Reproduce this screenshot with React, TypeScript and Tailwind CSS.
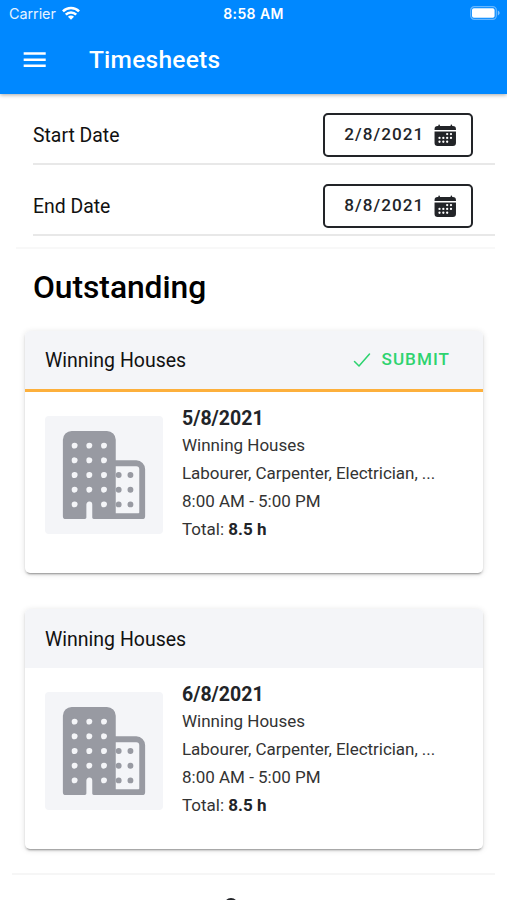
import { IoBusiness, IoCalendar, IoCheckmarkOutline, IoMenuSharp } from "react-icons/io5";

function StatusBar() {
  return (
    <div className="grid h-[27px] grid-cols-3 items-center px-[9px] font-['Inter',sans-serif] text-white">
      <div className="flex items-center gap-[6px]">
        <span className="pt-px text-[14.4px] leading-none tracking-[-0.05px] opacity-90">Carrier</span>
        <svg className="-mt-px" width="18" height="14" viewBox="0 0 19 14" fill="none" stroke="currentColor" strokeWidth="2.7">
          <path d="M1 5.2A12 12 0 0 1 18 5.2" />
          <path d="M4 8.8A7.8 7.8 0 0 1 15 8.8" />
          <path d="M9.5 14 6.3 10.9A4.5 4.5 0 0 1 12.7 10.9Z" fill="currentColor" stroke="none" />
        </svg>
      </div>
      <span className="pt-px text-center text-[14px] font-semibold leading-none tracking-[0.4px]">8:58 AM</span>
      <svg className="-mr-[3px] -mt-px justify-self-end" width="31" height="14" viewBox="0 0 31 14">
        <rect x="0.7" y="0.7" width="25.6" height="12.6" rx="3.6" fill="none" stroke="white" strokeOpacity="0.4" strokeWidth="1.2" />
        <rect x="2" y="2.2" width="22.6" height="9.6" rx="1.8" fill="white" />
        <path d="M27.8 4.6c2.4.8 2.4 4 0 4.8z" fill="white" fillOpacity="0.5" />
      </svg>
    </div>
  );
}

function DateRow({ label, value }: { label: string; value: string }) {
  return (
    <div className="ml-[33px] mr-[12px] flex h-[71px] items-center justify-between border-b-2 border-[#e8e8e8] pr-[22px] pt-[12px]">
      <span className="pt-[2px] text-[19.4px] text-[#111]">{label}</span>
      <button className="flex h-[44px] w-[150px] items-center justify-center gap-[9px] rounded-[5px] border-[2.4px] border-[#222428] pl-[6px] text-[17.1px] font-medium tracking-[1.03px] text-[#222428]">
        {value}
        <IoCalendar className="mt-px" size={24.5} />
      </button>
    </div>
  );
}

function TimesheetCard({ date, submit }: { date: string; submit?: boolean }) {
  return (
    <section className="ml-[25px] mr-[24px] overflow-hidden rounded-[5px] bg-white shadow-[0_3px_1px_-2px_rgba(0,0,0,0.2),0_2px_2px_0_rgba(0,0,0,0.14),0_1px_6px_0_rgba(0,0,0,0.12)]">
      <header className={`flex items-center justify-between bg-[#f4f5f8] pl-[20px] pr-[33px] pt-[2px] ${submit ? "h-[61px] border-b-[3px] border-[#fdb03c]" : "h-[59px]"}`}>
        <h2 className="text-[19.5px] text-[#111]">Winning Houses</h2>
        {submit && (
          <button className="-mt-[2px] flex items-center gap-[8px] text-[17.1px] font-medium tracking-[1.03px] text-[#2dd36f]">
            <IoCheckmarkOutline size={24} />
            SUBMIT
          </button>
        )}
      </header>
      <div className="flex h-[181px] gap-[20px] px-[20px] pt-[24px]">
        <div className="flex size-[118px] shrink-0 items-center justify-center rounded-[4px] bg-[#f4f5f8] pb-px text-[#989aa2]">
          <IoBusiness size={94} />
        </div>
        <div className="-ml-px -mt-[11px] text-[17px] leading-[28px] text-[#333]">
          <h3 className="h-[26px] text-[19.5px] font-bold leading-[28px] text-[#222428]">{date}</h3>
          <p>Winning Houses</p>
          <p className="tracking-[-0.04px]">Labourer, Carpenter, Electrician, ...</p>
          <p>8:00 AM - 5:00 PM</p>
          <p>Total: <b className="text-[#222428]">8.5 h</b></p>
        </div>
      </div>
    </section>
  );
}

export default function App() {
  return (
    <div className="h-[900px] w-[507px] overflow-hidden bg-white font-['Roboto',sans-serif]">
      <div className="relative h-[94px] bg-[#0088ff] text-white shadow-[0_1px_4px_rgba(0,0,0,0.35)]">
        <StatusBar />
        <div className="flex h-[66px] items-center pl-[20px]">
          <IoMenuSharp size={29.4} />
          <h1 className="ml-[39.5px] text-[24.5px] font-medium tracking-[0.25px]">Timesheets</h1>
        </div>
      </div>
      <DateRow label="Start Date" value="2/8/2021" />
      <DateRow label="End Date" value="8/8/2021" />
      <div className="ml-[16px] mr-[12px] mt-[11px] border-t-2 border-[#f8f8f8]" />
      <h1 className="ml-[33px] mt-[16px] h-[66px] text-[31.8px] font-medium leading-[44px] tracking-[-0.05px] text-black">Outstanding</h1>
      <TimesheetCard date="5/8/2021" submit />
      <div className="h-[36px]" />
      <TimesheetCard date="6/8/2021" />
      <div className="mx-[12px] mt-[24px] border-t-2 border-[#f6f6f6]" />
      <div className="ml-[224px] mt-[23px] size-[14px] rounded-full border-2 border-[#222428]" />
    </div>
  );
}
